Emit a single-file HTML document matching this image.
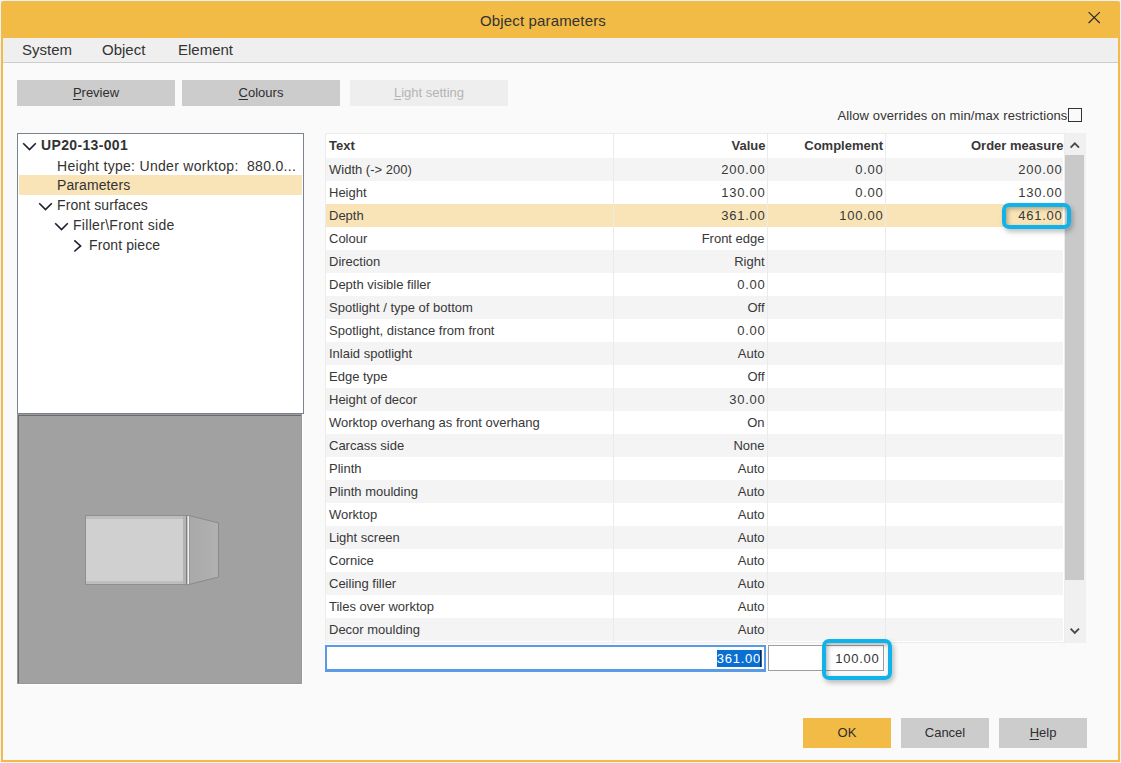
<!DOCTYPE html>
<html><head><meta charset="utf-8">
<style>
*{box-sizing:border-box;margin:0;padding:0}
html,body{width:1121px;height:763px;overflow:hidden;background:#eef2fb;font-family:"Liberation Sans",sans-serif;color:#333}
.a{position:absolute}
#win{left:1px;top:1px;width:1119px;height:761px;background:#f2bb46;border-radius:2px 2px 0 0}
#content{left:3px;top:63px;width:1115px;height:697px;background:#fafafa}
#title{left:480px;top:2px;height:37px;line-height:37px;font-size:15px;letter-spacing:0.15px;color:#333;white-space:nowrap}
#menu{left:3px;top:38px;width:1115px;height:25px;background:#efefef;border-bottom:1px solid #cdcdcd}
.mi{top:38px;height:24px;line-height:24px;font-size:15px;white-space:nowrap}
.btn{height:26px;line-height:26px;font-size:13px;text-align:center;background:#cccccc;color:#2e2e2e;white-space:nowrap}
.btn u{text-decoration:underline;text-underline-offset:2px;text-decoration-thickness:1px}
.tree{left:17px;top:133px;width:287px;height:281px;background:#fff;border:1px solid #7b8390}
.tr{height:20px;line-height:20px;font-size:14px;white-space:nowrap}
.tbl{left:325px;top:133px;width:740px;height:510px;background:#fff;border:1px solid #ececec}
.row{left:326px;width:737px;height:23px;line-height:23px;font-size:13px;white-space:nowrap;color:#383838}
.g{background:#f4f4f4}
.hl{background:#f9e4b7}
.c{position:absolute;top:0;height:23px}
.num{letter-spacing:0.75px}
.vl{top:134px;width:1px;height:508px;background:#ebebeb}
</style></head><body>
<div id="win" class="a"></div>
<div id="content" class="a"></div>
<div id="title" class="a">Object parameters</div>
<div id="menu" class="a"></div>
<div class="a mi" style="left:22px">System</div>
<div class="a mi" style="left:102px">Object</div>
<div class="a mi" style="left:178px">Element</div>

<div class="a btn" style="left:17px;top:80px;width:158px"><u>P</u>review</div>
<div class="a btn" style="left:182px;top:80px;width:158px"><u>C</u>olours</div>
<div class="a btn" style="left:350px;top:80px;width:158px;background:#eeeeee;color:#b4b4b4"><u>L</u>ight setting</div>

<div class="a" style="left:800px;top:106px;width:267.5px;height:20px;line-height:20px;font-size:13px;letter-spacing:0.12px;text-align:right;white-space:nowrap">Allow overrides on min/max restrictions</div>
<div class="a" style="left:1068px;top:108px;width:14px;height:14px;border:1px solid #333;background:#fafafa"></div>

<div class="a tree"></div>

<!-- close X -->
<svg class="a" style="left:1086px;top:9px" width="16" height="16" viewBox="0 0 16 16"><path d="M2.6 3.2L13.8 14M13.8 3.2L2.6 14" stroke="#22222e" stroke-width="1.05" fill="none"/></svg>

<svg class="a" style="left:22px;top:142px" width="15" height="9" viewBox="0 0 15 9"><path d="M1.2 1.3L7.5 7.6L13.8 1.3" stroke="#1e1e2e" stroke-width="1.6" fill="none"/></svg>
<div class="a tr" style="left:41px;top:135px;font-weight:bold;letter-spacing:0.35px">UP20-13-001</div>
<div class="a tr" style="left:57px;top:156px;letter-spacing:0.3px">Height type: Under worktop:&nbsp; 880.0...</div>
<div class="a hl" style="left:19px;top:175px;width:283px;height:20px"></div>
<div class="a tr" style="left:57px;top:175px;letter-spacing:0.1px">Parameters</div>
<svg class="a" style="left:38px;top:202px" width="15" height="9" viewBox="0 0 15 9"><path d="M1.2 1.3L7.5 7.6L13.8 1.3" stroke="#1e1e2e" stroke-width="1.6" fill="none"/></svg>
<div class="a tr" style="left:57px;top:195px;letter-spacing:0.1px">Front surfaces</div>
<svg class="a" style="left:54px;top:222px" width="15" height="9" viewBox="0 0 15 9"><path d="M1.2 1.3L7.5 7.6L13.8 1.3" stroke="#1e1e2e" stroke-width="1.6" fill="none"/></svg>
<div class="a tr" style="left:73px;top:215px;letter-spacing:0.3px">Filler\Front side</div>
<svg class="a" style="left:73px;top:239px" width="10" height="14" viewBox="0 0 10 14"><path d="M1.3 1.3L7.6 6.9L1.3 12.5" stroke="#1e1e2e" stroke-width="1.6" fill="none"/></svg>
<div class="a tr" style="left:89px;top:235px;letter-spacing:0.1px">Front piece</div>

<!-- preview -->
<div class="a" style="left:17px;top:414px;width:286px;height:271px;background:#fff"></div>
<div class="a" style="left:17px;top:414px;width:285px;height:270px;background:#a1a1a1;border-top:1px solid #9a9a9a;border-left:1px solid #9a9a9a;border-right:1px solid #979797;border-bottom:1px solid #979797"></div>
<div class="a" style="left:18px;top:415px;width:283px;height:268px;border-top:1px solid #6b6b6b;border-left:1px solid #6b6b6b"></div>
<svg class="a" style="left:80px;top:510px" width="145" height="82" viewBox="80 510 145 82">
<defs><linearGradient id="sg" x1="0" x2="1" y1="0" y2="0"><stop offset="0" stop-color="#a9a9a9"/><stop offset="1" stop-color="#b1b1b1"/></linearGradient></defs>
<polygon points="189,515.5 218.5,523 218.5,577 189,584.5" fill="url(#sg)" stroke="#8a8a8a" stroke-width="1"/>
<rect x="85.5" y="515.5" width="103" height="69" fill="#bdbebd" stroke="#8e8e8e" stroke-width="1"/>
<rect x="86" y="519" width="97" height="62" fill="#cfd0cf"/>
<rect x="183" y="516" width="3" height="68" fill="#b3b3b3"/>
<rect x="186" y="516" width="1.5" height="68" fill="#7e7e7e"/>
<rect x="187.5" y="516" width="1.5" height="68" fill="#eeeeee"/>
</svg>

<!-- table -->
<div class="a tbl"></div>
<div class="a row" style="top:134px;height:24px;line-height:24px;font-weight:bold"><span class="c" style="left:3px;height:24px">Text</span><span class="c" style="right:297.5px;height:24px">Value</span><span class="c" style="right:180px;height:24px">Complement</span><span class="c" style="right:-0.5px;height:24px">Order measure</span></div>
<div class="a row g" style="top:158px"><span class="c" style="left:3px">Width (-&gt; 200)</span><span class="c num" style="right:297.5px">200.00</span><span class="c num" style="right:179.5px">0.00</span><span class="c num" style="right:0.5px">200.00</span></div>
<div class="a row " style="top:181px"><span class="c" style="left:3px">Height</span><span class="c num" style="right:297.5px">130.00</span><span class="c num" style="right:179.5px">0.00</span><span class="c num" style="right:0.5px">130.00</span></div>
<div class="a row hl" style="top:204px"><span class="c" style="left:3px">Depth</span><span class="c num" style="right:297.5px">361.00</span><span class="c num" style="right:179.5px">100.00</span><span class="c num" style="right:0.5px">461.00</span></div>
<div class="a row " style="top:227px"><span class="c" style="left:3px">Colour</span><span class="c" style="right:298.5px">Front edge</span></div>
<div class="a row g" style="top:250px"><span class="c" style="left:3px">Direction</span><span class="c" style="right:298.5px">Right</span></div>
<div class="a row " style="top:273px"><span class="c" style="left:3px">Depth visible filler</span><span class="c num" style="right:297.5px">0.00</span></div>
<div class="a row g" style="top:296px"><span class="c" style="left:3px">Spotlight / type of bottom</span><span class="c" style="right:298.5px">Off</span></div>
<div class="a row " style="top:319px"><span class="c" style="left:3px">Spotlight, distance from front</span><span class="c num" style="right:297.5px">0.00</span></div>
<div class="a row g" style="top:342px"><span class="c" style="left:3px">Inlaid spotlight</span><span class="c" style="right:298.5px">Auto</span></div>
<div class="a row " style="top:365px"><span class="c" style="left:3px">Edge type</span><span class="c" style="right:298.5px">Off</span></div>
<div class="a row g" style="top:388px"><span class="c" style="left:3px">Height of decor</span><span class="c num" style="right:297.5px">30.00</span></div>
<div class="a row " style="top:411px"><span class="c" style="left:3px">Worktop overhang as front overhang</span><span class="c" style="right:298.5px">On</span></div>
<div class="a row g" style="top:434px"><span class="c" style="left:3px">Carcass side</span><span class="c" style="right:298.5px">None</span></div>
<div class="a row " style="top:457px"><span class="c" style="left:3px">Plinth</span><span class="c" style="right:298.5px">Auto</span></div>
<div class="a row g" style="top:480px"><span class="c" style="left:3px">Plinth moulding</span><span class="c" style="right:298.5px">Auto</span></div>
<div class="a row " style="top:503px"><span class="c" style="left:3px">Worktop</span><span class="c" style="right:298.5px">Auto</span></div>
<div class="a row g" style="top:526px"><span class="c" style="left:3px">Light screen</span><span class="c" style="right:298.5px">Auto</span></div>
<div class="a row " style="top:549px"><span class="c" style="left:3px">Cornice</span><span class="c" style="right:298.5px">Auto</span></div>
<div class="a row g" style="top:572px"><span class="c" style="left:3px">Ceiling filler</span><span class="c" style="right:298.5px">Auto</span></div>
<div class="a row " style="top:595px"><span class="c" style="left:3px">Tiles over worktop</span><span class="c" style="right:298.5px">Auto</span></div>
<div class="a row g" style="top:618px"><span class="c" style="left:3px">Decor moulding</span><span class="c" style="right:298.5px">Auto</span></div>
<div class="a vl" style="left:613px"></div>
<div class="a vl" style="left:767px"></div>
<div class="a vl" style="left:885px"></div>
<!-- scrollbar -->
<div class="a" style="left:1065px;top:133px;width:21px;height:510px;background:#f0f0f0"></div>
<div class="a" style="left:1065px;top:155px;width:19px;height:425px;background:#c9c9c9"></div>
<svg class="a" style="left:1068px;top:139px" width="14" height="11" viewBox="0 0 14 11"><path d="M2.6 8.6L6.8 4.3L11 8.6" stroke="#4a4a4a" stroke-width="1.9" fill="none"/></svg>
<svg class="a" style="left:1068px;top:626px" width="14" height="11" viewBox="0 0 14 11"><path d="M2.6 2.6L6.8 6.9L11 2.6" stroke="#4a4a4a" stroke-width="1.9" fill="none"/></svg>

<!-- inputs -->
<div class="a" style="left:325px;top:645px;width:441px;height:27px;background:#fff;border:2px solid #5b9be6;border-bottom-width:3px"></div>
<div class="a" style="left:717px;top:650px;width:45px;height:17px;background:#0a6fd2"></div>
<div class="a num" style="left:700px;top:650px;width:61px;height:17px;line-height:17px;font-size:13px;text-align:right;color:#fff">361.00</div>
<div class="a" style="left:760px;top:650px;width:1px;height:17px;background:#222"></div>
<div class="a" style="left:768px;top:645px;width:116px;height:26px;background:#fff;border:1px solid #9e9e9e"></div>
<div class="a num" style="left:800px;top:646px;width:79.5px;height:26px;line-height:26px;font-size:13px;text-align:right">100.00</div>

<!-- cyan highlights -->
<div class="a" style="left:1002px;top:203px;width:69px;height:26px;border:4px solid #10b2ea;border-radius:7px;box-shadow:2px 3px 5px rgba(0,0,0,0.25), inset 2px 2px 4px rgba(0,0,0,0.28)"></div>
<div class="a" style="left:822px;top:639px;width:70px;height:41px;border:4px solid #10b2ea;border-radius:7px;box-shadow:2px 3px 5px rgba(0,0,0,0.25), inset 2px 2px 4px rgba(0,0,0,0.28)"></div>

<!-- bottom buttons -->
<div class="a btn" style="left:803px;top:718px;width:88px;height:30px;line-height:30px;background:#f2bb46">OK</div>
<div class="a btn" style="left:901px;top:718px;width:88px;height:30px;line-height:30px">Cancel</div>
<div class="a btn" style="left:999px;top:718px;width:88px;height:30px;line-height:30px"><u>H</u>elp</div>
</body></html>
